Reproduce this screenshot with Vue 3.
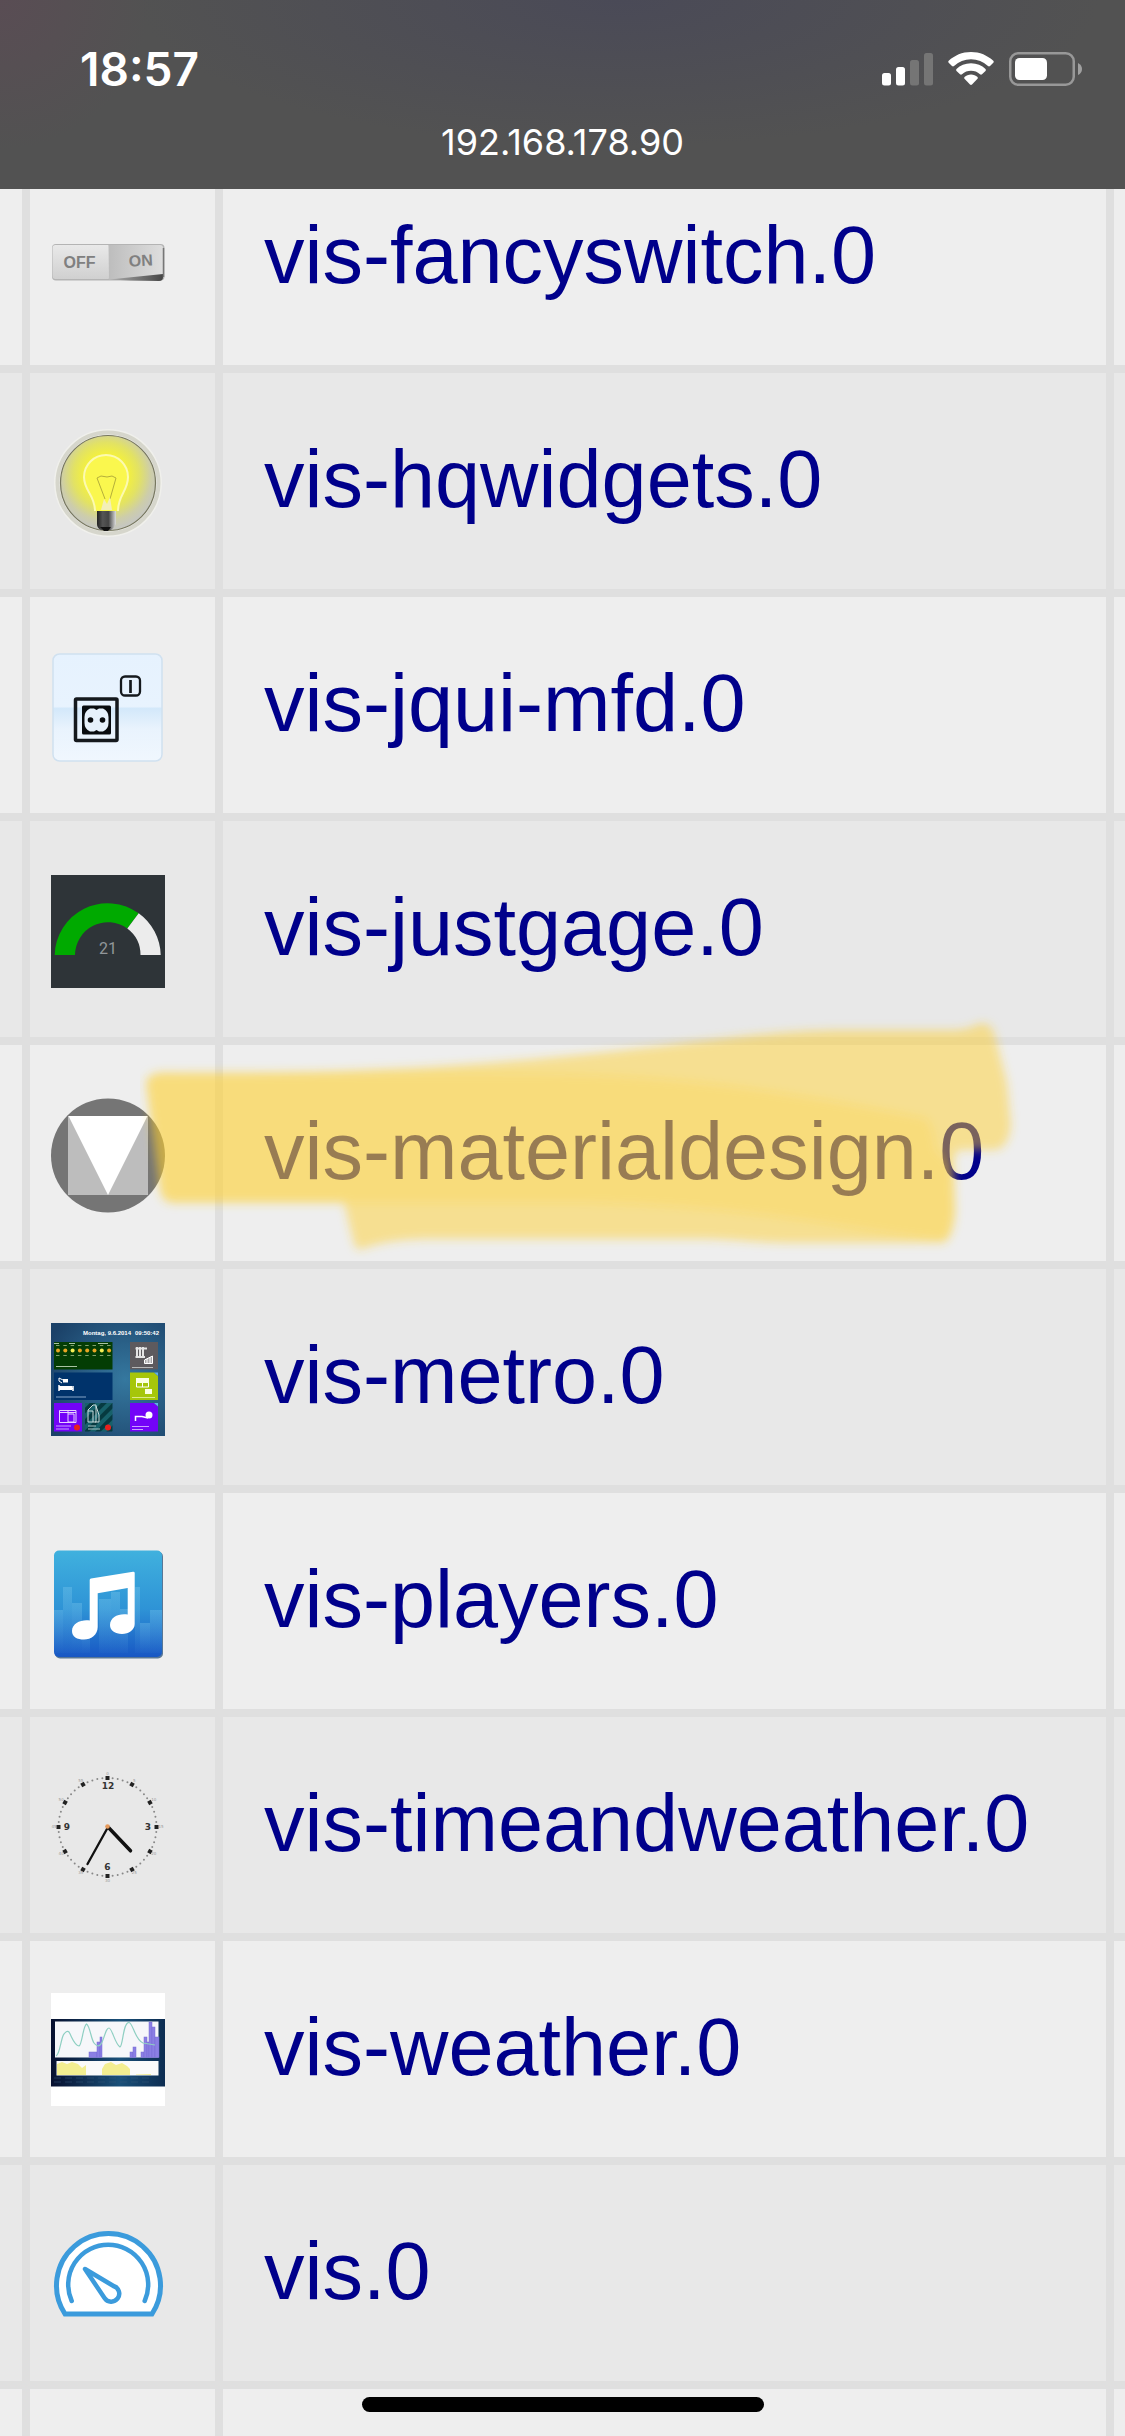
<script setup>
import { ref } from "vue";

const instances = ref([
  { name: "vis-fancyswitch.0", icon: "switch" },
  { name: "vis-hqwidgets.0", icon: "bulb" },
  { name: "vis-jqui-mfd.0", icon: "socket" },
  { name: "vis-justgage.0", icon: "gage" },
  { name: "vis-materialdesign.0", icon: "material", marked: true },
  { name: "vis-metro.0", icon: "metro" },
  { name: "vis-players.0", icon: "players" },
  { name: "vis-timeandweather.0", icon: "clock" },
  { name: "vis-weather.0", icon: "weather" },
  { name: "vis.0", icon: "vis" },
  { name: "", icon: "" },
]);

const forecast = [0, 1, 2, 3, 4, 5, 6, 7];

// equalizer bars behind the note: x, width, top
const equalizer = [
  [3, 9, 63],
  [12, 9, 40],
  [21, 10, 56],
  [31, 8, 74],
  [48, 12, 52],
  [60, 9, 45],
  [69, 8, 62],
  [84, 5, 40],
  [89, 10, 76],
  [99, 12, 63],
];

// rain bars: x, width, top
const rain = [
  [38, 8, 57],
  [46, 3, 47],
  [49, 2, 42],
  [79, 3, 57],
  [82, 3, 52],
  [90, 3, 57],
  [93, 3, 42],
  [96, 2, 47],
  [98, 3, 27],
  [101, 3, 32],
  [104, 4, 42],
];

function isHour(n) {
  return n % 5 === 0;
}

function minutePos(n, radius) {
  const angle = (n * 6 * Math.PI) / 180;
  return {
    x: 56.5 + radius * Math.sin(angle),
    y: 56 - radius * Math.cos(angle),
  };
}
</script>

<template>
  <div class="screen">
    <header class="topbar">
      <div class="status">
        <span class="status__time">18:57</span>
        <div class="status__icons">
          <svg width="51" height="34" viewBox="0 0 51 34">
            <rect x="0" y="21" width="9" height="12.500" rx="2.500" fill="#fff" />
            <rect x="14" y="15" width="9" height="18.500" rx="2.500" fill="#fff" />
            <rect x="28" y="8" width="9" height="25.500" rx="2.500" fill="#757575" />
            <rect x="42" y="1" width="9" height="32.500" rx="2.500" fill="#757575" />
          </svg>
          <svg width="46" height="34" viewBox="0 0 46 34">
            <g fill="#fff">
              <path d="M23 0C31.800 0 39.500 3.400 45.300 8.800Q46.200 9.800 45.300 10.800L42 14Q41 14.800 40 14A24.500 24.500 0 0 0 6 14Q5 14.800 4 14L.7 10.800Q-.2 9.800.7 8.800C6.500 3.400 14.200 0 23 0Z" />
              <path d="M23 11.200C28.800 11.200 33.800 13.400 37.500 16.900Q38.400 17.900 37.500 18.900L34 22.300Q33 23.100 32 22.300A13.500 13.500 0 0 0 14 22.300Q13 23.100 12 22.300L8.500 18.900Q7.600 17.900 8.500 16.900C12.200 13.400 17.200 11.200 23 11.200Z" />
              <path d="M23 22.500C25.500 22.500 27.800 23.400 29.500 24.900Q30.300 25.900 29.500 26.800L24 32.600Q23 33.500 22 32.600L16.500 26.800Q15.700 25.900 16.500 24.900C18.200 23.400 20.500 22.500 23 22.500Z" />
            </g>
          </svg>
          <svg width="73" height="34" viewBox="0 0 73 34">
            <rect x="1.250" y="1.250" width="63.500" height="31.500" rx="8" fill="none" stroke="#989898" stroke-width="2.500" />
            <rect x="6" y="6" width="32" height="22" rx="4.500" fill="#fff" />
            <path d="M69 11Q73 13 73 17T69 23Z" fill="#a0a0a0" />
          </svg>
        </div>
      </div>
      <div class="address">192.168.178.90</div>
    </header>

    <main class="content">
      <table class="instances">
        <colgroup>
          <col class="col-state" />
          <col class="col-icon" />
          <col />
          <col class="col-rest" />
        </colgroup>
        <tbody>
          <tr v-for="(item, index) in instances" :key="index">
            <td></td>
            <td class="cell-icon">
              <svg v-if="item.icon" class="icon" viewBox="0 0 114 114">
                <defs v-if="item.icon === 'switch'">
                  <linearGradient id="swOff" x1="0" y1="0" x2="0" y2="1">
                    <stop offset="0" stop-color="#e9e9e9" />
                    <stop offset="1" stop-color="#d0d0d0" />
                  </linearGradient>
                  <linearGradient id="swOn" x1="0" y1="0" x2="1" y2="0">
                    <stop offset="0" stop-color="#bdbdbd" />
                    <stop offset="1" stop-color="#dedede" />
                  </linearGradient>
                  <linearGradient id="swShade" x1="0" y1="0" x2="1" y2="0">
                    <stop offset="0" stop-color="#b0b0b0" />
                    <stop offset="1" stop-color="#454545" />
                  </linearGradient>
                </defs>
                <g v-if="item.icon === 'switch'">
                  <rect x="1" y="41" width="112.500" height="36.500" rx="4" fill="#b4b4b4" />
                  <rect x="1.500" y="42" width="58" height="34" rx="3" fill="url(#swOff)" />
                  <path d="M58 76.500L112 68V74Q112 78 108 78L80 77.500Z" fill="url(#swShade)" />
                  <path d="M57.500 42H109Q112 42 112 45V71L58 76.500Z" fill="url(#swOn)" />
                  <path d="M112.500 45V74" stroke="#777" stroke-width="1.500" />
                  <text x="28.500" y="65" text-anchor="middle" class="switch-text">OFF</text>
                  <text x="90" y="63" text-anchor="middle" class="switch-text" transform="rotate(-3 90 63)">ON</text>
                </g>

                <defs v-if="item.icon === 'bulb'">
                  <radialGradient id="glow" cx=".48" cy=".42" r=".56">
                    <stop offset="0" stop-color="#fbf64a" />
                    <stop offset=".4" stop-color="#f3f03e" />
                    <stop offset=".62" stop-color="#e2e264" />
                    <stop offset=".85" stop-color="#cdcdaa" />
                    <stop offset="1" stop-color="#c6c7c0" />
                  </radialGradient>
                  <linearGradient id="bulbBase">
                    <stop offset="0" stop-color="#222" />
                    <stop offset=".3" stop-color="#555" />
                    <stop offset=".6" stop-color="#444" />
                    <stop offset="1" stop-color="#ddd" />
                  </linearGradient>
                </defs>
                <g v-if="item.icon === 'bulb'">
                  <circle cx="57" cy="56" r="54" fill="#f0f0ec" />
                  <circle cx="57" cy="56" r="50.500" fill="none" stroke="#d6d6cc" stroke-width="4" />
                  <circle cx="57" cy="56" r="47.500" fill="url(#glow)" stroke="#77775f" stroke-width="1.200" />
                  <path d="M44 84C44 68 33 64 33 50A22 22 0 0 1 77 50C77 64 67 68 67 84" fill="#faf74e" stroke="#fcfab0" stroke-width="2" />
                  <path d="M54 72L46 51L50 49L56 50L61 49L65 51L59 72" fill="none" stroke="#b5af3a" stroke-width="1" />
                  <path d="M50 83L53 72L56 77L59 70L61 83Z" fill="#f3efb9" />
                  <path d="M46 84H65V97Q63 101 60 103H50Q46 101 46 97Z" fill="url(#bulbBase)" />
                  <path d="M49 100H60L57 104H53Z" fill="#111" />
                </g>

                <defs v-if="item.icon === 'socket'">
                  <linearGradient id="socketBg" x1="0" y1="0" x2="0" y2="1">
                    <stop offset="0" stop-color="#e6f2fe" />
                    <stop offset=".49" stop-color="#e8f3fe" />
                    <stop offset=".51" stop-color="#d3e8fa" />
                    <stop offset=".7" stop-color="#e9f3fd" />
                    <stop offset="1" stop-color="#f0f7fe" />
                  </linearGradient>
                </defs>
                <g v-if="item.icon === 'socket'">
                  <rect x="2" y="3" width="109" height="107" rx="6.500" fill="url(#socketBg)" stroke="#d0e1f0" stroke-width="1.500" />
                  <g fill="none" stroke="#15191d">
                    <rect x="70" y="25.500" width="19" height="19" rx="4" stroke-width="2.300" />
                    <path d="M79.500 29V42" stroke-width="2.700" />
                    <rect x="24.500" y="48" width="41.500" height="41.500" rx="1" stroke-width="3.500" />
                  </g>
                  <rect x="31" y="54.500" width="29" height="29" rx="1.500" fill="#090c0f" />
                  <path d="M39 57.500H43L45.500 59L48 57.500H52Q57.500 60 57.500 66V72Q57.500 78 52 80.500H48L45.500 79L43 80.500H39Q33.500 78 33.500 72V66Q33.500 60 39 57.500Z" fill="#e6f1fb" />
                  <circle cx="39.500" cy="69" r="2.800" fill="#090c0f" />
                  <circle cx="51.500" cy="69" r="2.800" fill="#090c0f" />
                </g>

                <g v-if="item.icon === 'gage'">
                  <rect width="114" height="113" fill="#2e3438" />
                  <path d="M3.700 80A53 53 0 0 1 87.700 38.300L76.300 53.500A33 33 0 0 0 24 80Z" fill="#0a0" />
                  <path d="M87.700 38.300A53 53 0 0 1 109.700 80H89.500A33 33 0 0 0 76.300 53.500Z" fill="#ececec" />
                  <text x="57" y="78.500" text-anchor="middle" class="gage-text">21</text>
                </g>

                <g v-if="item.icon === 'material'">
                  <circle cx="57" cy="56.500" r="57" fill="#757575" />
                  <rect x="17" y="17" width="80" height="79" fill="#bdbdbd" />
                  <path d="M17.500 17H96.500L57 96Z" fill="#fff" />
                </g>

                <defs v-if="item.icon === 'metro'">
                  <radialGradient id="metroBg" cx=".65" cy=".5" r=".75">
                    <stop offset="0" stop-color="#35789f" />
                    <stop offset="1" stop-color="#1b4168" />
                  </radialGradient>
                  <pattern id="stripes" width="8" height="8" patternUnits="userSpaceOnUse" patternTransform="rotate(45)">
                    <rect width="8" height="8" fill="#063a40" />
                    <rect width="4" height="8" fill="#17616a" />
                  </pattern>
                </defs>
                <g v-if="item.icon === 'metro'">
                  <rect width="114" height="113" fill="url(#metroBg)" />
                  <text x="32" y="12" class="metro-title">Montag, 9.6.2014</text>
                  <text x="108" y="12" text-anchor="end" class="metro-title">09:50:42</text>
                  <rect x="3" y="19" width="58.500" height="27.500" fill="#043d04" />
                  <g v-for="n in forecast" :key="n">
                    <circle :cx="7 + n * 7.300" cy="27.500" r="2" :fill="n % 4 === 2 ? '#f6ef55' : '#e9a623'" />
                    <path :d="`M${5 + n * 7.300} 22.500h3.500M${5 + n * 7.300} 32.500h3.500`" stroke="#7fa06c" stroke-width="1" />
                  </g>
                  <path d="M3 20.500H8M18 20.500H24M47 20.500H57M5 43.500H26" stroke="#a9c3a2" stroke-width="1" />
                  <rect x="3" y="49.500" width="58.500" height="27.500" fill="#00336b" />
                  <path d="M8 62V68M8 65.500H22M22 63V68" stroke="#fff" stroke-width="1.500" />
                  <path d="M8 63H21V67H8ZM12 56H17V59.500H12Z" fill="#fff" />
                  <path d="M12 57L8 55V58L11 60" fill="none" stroke="#fff" />
                  <path d="M5 74H35" stroke="#86a6c8" stroke-width="1" />
                  <rect x="3" y="80" width="28" height="28.500" fill="#7303f8" />
                  <path d="M8.500 87.500H25V99.500H8.500ZM17 87.500V99.500M17 91H23V99H17M8.500 89.500H25" fill="none" stroke="#e6d2ff" />
                  <path d="M5 103H20M5 106H18" stroke="#c9a0ff" stroke-width="1" />
                  <rect x="34" y="80" width="27.500" height="28.500" fill="url(#stripes)" />
                  <path d="M37 99V87L42 82H45V99ZM37 88H42V99M45 83L48 92V99H44" fill="none" stroke="#c9dcdc" />
                  <path d="M37 103H45M37 106H49" stroke="#a9c8c8" stroke-width="1" />
                  <circle cx="26" cy="104.500" r="3" fill="#e8201c" />
                  <circle cx="57" cy="104.500" r="3" fill="#e8201c" />
                  <rect x="79" y="19" width="28" height="27.500" fill="#5d5a5e" />
                  <path d="M86 24V35M89 24V35M92 24V35M84.500 25.500H96M84.500 34H94" stroke="#e4e4e4" stroke-width="2" />
                  <path d="M93.500 40.500V37L101.500 33V40.500ZM96 36V40M99 34V40" fill="#a8a6a8" stroke="#fff" />
                  <path d="M81 44.500H102" stroke="#b7b7b7" stroke-width="1" />
                  <path d="M79 49.500H103L107 53V77H79Z" fill="#a6c60a" />
                  <path d="M103 49.500H107V53Z" fill="#63b0e6" />
                  <path d="M85.500 55.500H97.500V64H85.500ZM91.500 55V64" fill="none" stroke="#fff" />
                  <path d="M85 55H98V60H85ZM94 66H101V71H94Z" fill="#fbffe0" />
                  <path d="M81 74.500H104" stroke="#dce98a" stroke-width="1" />
                  <path d="M79 80H103L107 83.500V108.500H79Z" fill="#7303f8" />
                  <path d="M103 80H107V83.500Z" fill="#63b0e6" />
                  <circle cx="98" cy="92" r="3.500" fill="#fff" />
                  <path d="M84.500 98V93.500H91L97 95" fill="none" stroke="#fff" stroke-width="1.500" />
                  <path d="M81 103.500H98M81 106.500H92" stroke="#c9a0ff" stroke-width="1" />
                </g>

                <defs v-if="item.icon === 'players'">
                  <linearGradient id="playersBg" x1="0" y1="0" x2="0" y2="1">
                    <stop offset="0" stop-color="#40b1de" />
                    <stop offset=".55" stop-color="#2e93d6" />
                    <stop offset="1" stop-color="#1857c4" />
                  </linearGradient>
                  <linearGradient id="barFade" x1="0" y1="0" x2="0" y2="1">
                    <stop offset="0" stop-color="#8ad0f0" stop-opacity=".3" />
                    <stop offset="1" stop-color="#8ad0f0" stop-opacity=".03" />
                  </linearGradient>
                </defs>
                <g v-if="item.icon === 'players'">
                  <rect x="4" y="4.500" width="108" height="107" rx="5" fill="#587796" />
                  <rect x="3" y="3.500" width="108" height="106.500" rx="5" fill="url(#playersBg)" />
                  <rect v-for="bar in equalizer" :key="bar[0]" :x="bar[0]" :y="bar[2]" :width="bar[1]" :height="106 - bar[2]" fill="url(#barFade)" />
                  <path d="M40 31.500L82 24.700Q83.700 24.500 83.700 26V77C83.700 83 77.500 87 71 87C64 87 59 83.500 59 78C59 70 68 66 76.700 67.500V41L46.700 46.300V80C46.700 88 40 92.500 33 92.500C26 92.500 21 90 21 84C21 76 31 72 38.700 73.500V33Q38.700 31.700 40 31.500Z" fill="#fff" />
                </g>

                <g v-if="item.icon === 'clock'">
                  <template v-for="n in 60" :key="n">
                    <rect
                      v-if="isHour(n)"
                      x="54.500"
                      y="5"
                      width="4"
                      height="4"
                      fill="#222"
                      :transform="`rotate(${n * 6} 56.5 56)`"
                    />
                    <circle v-else :cx="minutePos(n, 49).x" :cy="minutePos(n, 49).y" r="1" fill="#888" />
                    <text
                      v-if="isHour(n)"
                      :x="minutePos(n, 53.500).x"
                      :y="minutePos(n, 53.500).y + 1"
                      text-anchor="middle"
                      class="clock-minute"
                    >{{ n % 60 }}</text>
                  </template>
                  <g class="clock-hour" text-anchor="middle">
                    <text x="57" y="18">12</text>
                    <text x="97" y="58.500">3</text>
                    <text x="56.500" y="98.500">6</text>
                    <text x="16" y="58.500">9</text>
                  </g>
                  <path d="M56.500 57L36.500 93" stroke="#111" stroke-width="2.300" stroke-linecap="round" />
                  <path d="M57 56L79.500 79.800" stroke="#111" stroke-width="3.500" stroke-linecap="round" />
                  <circle cx="56.500" cy="55.500" r="2.300" fill="#e59a5c" />
                </g>

                <defs v-if="item.icon === 'weather'">
                  <linearGradient id="weatherBg">
                    <stop offset="0" stop-color="#07102f" />
                    <stop offset=".6" stop-color="#1a5079" />
                    <stop offset="1" stop-color="#0d2d52" />
                  </linearGradient>
                </defs>
                <g v-if="item.icon === 'weather'">
                  <rect y="-2" width="114" height="113" fill="#fff" />
                  <rect y="24" width="114" height="67.500" fill="url(#weatherBg)" />
                  <rect x="4" y="26.500" width="103.500" height="36" fill="#f6f7fa" />
                  <rect v-for="bar in rain" :key="bar[0]" :x="bar[0]" :y="bar[2]" :width="bar[1]" :height="62.500 - bar[2]" fill="#8b7fe4" stroke="#776bd4" stroke-width=".5" />
                  <path d="M5 61C9 60 10 42 13 39Q16 35 18 37C21 42 23 50 28 51C31 50 32 31 35.500 29C39 31 40 44 43 48C49 56 52 45 53 42C55 36 56 33 58 33C61 33 64 49 69 52C72 51 72 27 78 27.500C82 28 84 45 92 48L104 50" fill="none" stroke="#8ecfc2" stroke-width="1.200" />
                  <rect x="5.500" y="66" width="102" height="14.500" fill="#fafafa" />
                  <path d="M6 80V69L11 67L16 69L21 67L27 69L31 73L35 70V80ZM51 80V74L54 69L60 67L65 70L71 68L76 71L79 74V80ZM85 80V79.500L100 79V80Z" fill="#f3ee91" />
                  <path d="M3 83H100M3 87H100" stroke="#36597b" stroke-width="1" stroke-dasharray="7 4" opacity=".5" />
                </g>

                <g v-if="item.icon === 'vis'" fill="none" stroke="#3b9bdc" stroke-linejoin="round">
                  <path d="M14 95A52 52 0 1 1 101 95Z" fill="#fff" stroke-width="5" stroke-linejoin="miter" />
                  <path d="M20.700 82A40 40 0 1 1 93.700 82" stroke-width="4.500" stroke-linecap="round" />
                  <path d="M34 50L53.500 79A8 8 0 1 0 62.500 67Z" stroke-width="4.500" />
                </g>
              </svg>
            </td>
            <td class="cell-name">
              <a v-if="item.name" href="#" class="instance-link">{{ item.name }}</a>
              <svg v-if="item.marked" class="marker" viewBox="0 0 900 280">
                <defs>
                  <filter id="soft" x="-5%" y="-10%" width="110%" height="120%">
                    <feGaussianBlur stdDeviation="5" />
                  </filter>
                </defs>
                <g fill="#ffcf2c" filter="url(#soft)">
                  <path
                    opacity=".48"
                    d="M6 82Q8 73 22 72C200 74 330 68 520 46C600 36 650 30 704 30H815Q830 29 838 24Q852 20 856 40L867 83L871 125Q869 148 855 150H820Q812 152 814 175L815 213Q812 242 802 243H660C620 243 600 240 565 239H283Q245 240 222 249Q216 252 213 240L204 203H35Q22 203 20 190Z"
                  />
                  <path
                    opacity=".23"
                    d="M6 84Q8 75 22 74C180 75 300 72 420 74C540 76 640 90 785 118Q793 122 796 150L813 165L815 213Q812 242 800 240C720 232 620 206 440 203H35Q22 203 20 190Z"
                  />
                </g>
              </svg>
            </td>
            <td></td>
          </tr>
        </tbody>
      </table>
    </main>

    <div class="home-indicator"></div>
  </div>
</template>

<style>
body {
  margin: 0;
  background: #eee;
}
</style>

<style scoped>
.screen {
  position: relative;
  display: flex;
  flex-direction: column;
  height: 100vh;
  overflow: hidden;
  font-family: "Liberation Sans", Arial, sans-serif;
}

.topbar {
  flex: none;
  padding: 44px 0 25px;
  background:
    radial-gradient(circle at 0 0, rgba(90, 76, 84, 0.9), rgba(90, 76, 84, 0) 150px),
    radial-gradient(ellipse at 55% 0, #4a4a57, rgba(74, 74, 87, 0) 55%),
    #525252;
  color: #fff;
  font-family: Inter, sans-serif;
}

.status {
  display: flex;
  align-items: center;
  justify-content: space-between;
  height: 50px;
  padding: 0 43px 0 80px;
}

.status__time {
  font-size: 46px;
  font-weight: 600;
  line-height: 50px;
}

.status__icons {
  display: flex;
  align-items: center;
  gap: 15px;
}

.address {
  margin-top: 26px;
  font-size: 36px;
  line-height: 44px;
  text-align: center;
}

.content {
  flex: 1;
  display: flex;
  flex-direction: column;
  min-height: 0;
  overflow: hidden;
}

/* the list is scrolled a little under the top bar */
.instances {
  flex: none;
  width: 100%;
  margin-top: -40px;
  table-layout: fixed;
  border-collapse: separate;
  border-spacing: 0;
}

.col-state {
  width: 30px;
}

.col-icon {
  width: 193px;
}

.col-rest {
  width: 11px;
}

.instances td {
  box-sizing: border-box;
  height: 224px;
  padding: 0;
  border-right: 8px solid #dfdfdf;
  border-bottom: 8px solid #dfdfdf;
  background: #eee;
  vertical-align: middle;
}

.instances tr:nth-child(even) td {
  background: #e8e8e8;
}

.instances td:last-child {
  border-right: none;
}

.instances .cell-icon {
  padding: 6px 0 0 21px;
}

.instances .cell-name {
  position: relative;
  padding: 0 0 4px 41px;
}

.icon {
  display: block;
  width: 114px;
  height: 114px;
  overflow: visible;
}

.instance-link {
  color: #00008b;
  font-size: 81px;
  line-height: 96px;
  text-decoration: none;
  white-space: nowrap;
}

.marker {
  position: absolute;
  top: -45px;
  left: -83px;
  z-index: 1;
  width: 900px;
  height: 280px;
  pointer-events: none;
}

.home-indicator {
  position: absolute;
  bottom: 24px;
  left: 50%;
  width: 402px;
  height: 15px;
  border-radius: 8px;
  background: #000;
  transform: translateX(-50%);
}

.switch-text {
  fill: #808080;
  font-family: "Liberation Sans", Arial, sans-serif;
  font-size: 16px;
  font-weight: 700;
}

.gage-text {
  fill: #92979a;
  font-family: Roboto, sans-serif;
  font-size: 16px;
}

.metro-title {
  fill: #fff;
  font-family: "Liberation Sans", Arial, sans-serif;
  font-size: 6px;
  font-weight: 700;
}

.clock-hour {
  fill: #333;
  font-family: "DejaVu Sans", sans-serif;
  font-size: 9px;
  font-weight: 700;
}

.clock-minute {
  fill: #999;
  font-family: "DejaVu Sans", sans-serif;
  font-size: 4px;
}
</style>
